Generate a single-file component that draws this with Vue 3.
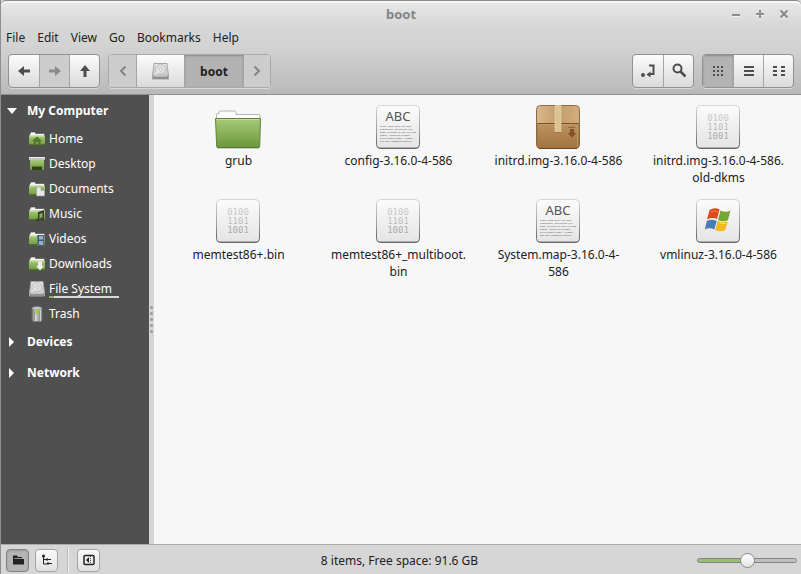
<script setup>
import { ref } from 'vue';

const menus = ['File', 'Edit', 'View', 'Go', 'Bookmarks', 'Help'];

const places = [
  { name: 'Home', icon: 'home' },
  { name: 'Desktop', icon: 'desktop' },
  { name: 'Documents', icon: 'documents' },
  { name: 'Music', icon: 'music' },
  { name: 'Videos', icon: 'videos' },
  { name: 'Downloads', icon: 'downloads' },
  { name: 'File System', icon: 'disk', used: 7 },
  { name: 'Trash', icon: 'trash' },
];

// long names are kept as the lines they break into
const files = [
  { lines: ['grub'], type: 'folder' },
  { lines: ['config-3.16.0-4-586'], type: 'text' },
  { lines: ['initrd.img-3.16.0-4-586'], type: 'package' },
  { lines: ['initrd.img-3.16.0-4-586.', 'old-dkms'], type: 'binary' },
  { lines: ['memtest86+.bin'], type: 'binary' },
  { lines: ['memtest86+_multiboot.', 'bin'], type: 'binary' },
  { lines: ['System.map-3.16.0-4-', '586'], type: 'text' },
  { lines: ['vmlinuz-3.16.0-4-586'], type: 'windows' },
];

const view = ref('icons');
const sidePane = ref('places');
const zoom = ref(50);
</script>

<template>
  <div class="window">
    <svg class="defs" aria-hidden="true">
      <defs>
        <linearGradient id="green" x1="0" y1="0" x2="0" y2="1">
          <stop offset="0" stop-color="#a7ca79" />
          <stop offset="1" stop-color="#6c973b" />
        </linearGradient>
        <linearGradient id="tile" x1="0" y1="0" x2="0" y2="1">
          <stop offset="0" stop-color="#fbfbfb" />
          <stop offset="1" stop-color="#e4e4e4" />
        </linearGradient>
        <linearGradient id="edge" x1="0" y1="0" x2="0" y2="1">
          <stop offset="0" stop-color="#d5d5d5" />
          <stop offset="0.6" stop-color="#9a9a9a" />
          <stop offset="1" stop-color="#5a5a5a" />
        </linearGradient>
        <linearGradient id="box" x1="0" y1="0" x2="0" y2="1">
          <stop offset="0" stop-color="#d5b083" />
          <stop offset="0.45" stop-color="#bb925f" />
          <stop offset="1" stop-color="#a0723e" />
        </linearGradient>
        <linearGradient id="flap" x1="0" y1="0" x2="1" y2="0">
          <stop offset="0" stop-color="#d9b78c" />
          <stop offset="0.5" stop-color="#c39d6b" />
          <stop offset="1" stop-color="#d2ad7d" />
        </linearGradient>
        <linearGradient id="metal" x1="0" y1="0" x2="0" y2="1">
          <stop offset="0" stop-color="#e6e6e6" />
          <stop offset="1" stop-color="#c4c4c4" />
        </linearGradient>
        <linearGradient id="can" x1="0" y1="0" x2="1" y2="0">
          <stop offset="0" stop-color="#6f6f6f" />
          <stop offset="0.35" stop-color="#dedede" />
          <stop offset="0.6" stop-color="#a5a5a5" />
          <stop offset="0.85" stop-color="#d2d2d2" />
          <stop offset="1" stop-color="#707070" />
        </linearGradient>
        <symbol id="drive" viewBox="0 0 16 16">
          <path d="M2 .5h12l1.500 11v3.500h-15v-3.500z" fill="url(#metal)" stroke="#a8a8a8" />
          <ellipse cx="8" cy="6" rx="5" ry="4.500" fill="#dedede" stroke="#b4b4b4" stroke-width=".7" />
          <circle cx="8" cy="6" r="1.500" fill="#eee" stroke="#aaa" stroke-width=".5" />
          <path d="M3.500 10.500l3-3" stroke="#f8f8f8" />
          <path d="M1 12h14v3H1z" fill="#909090" />
          <path d="M2 12.500h12" stroke="#c6c6c6" />
        </symbol>
      </defs>
    </svg>

    <header class="header">
      <div class="titlebar">
        <h1>boot</h1>
        <div class="controls">
          <button aria-label="Minimize">
            <svg width="8" height="8"><path d="M0 5h8" stroke="#8c8c8c" stroke-width="2" /></svg>
          </button>
          <button aria-label="Maximize">
            <svg width="8" height="8"><path d="M0 4h8M4 0v8" stroke="#8c8c8c" stroke-width="2" /></svg>
          </button>
          <button aria-label="Close">
            <svg width="8" height="8"><path d="M.5.5l7 7M7.500.5l-7 7" stroke="#8c8c8c" stroke-width="2.200" /></svg>
          </button>
        </div>
      </div>

      <nav class="menubar">
        <button v-for="menu in menus" :key="menu">{{ menu }}</button>
      </nav>

      <div class="toolbar">
        <div class="group">
          <button aria-label="Back">
            <svg width="14" height="14"><path d="M1 7l6-5v3.500h6v3H7V12z" fill="#4d4d4d" /></svg>
          </button>
          <button class="off" aria-label="Forward" disabled>
            <svg width="14" height="14"><path d="M13 7L7 2v3.500H1v3h6V12z" fill="#8a8a8a" /></svg>
          </button>
          <button aria-label="Up">
            <svg width="14" height="14"><path d="M7 1l5 6H8.500v6h-3V7H2z" fill="#4d4d4d" /></svg>
          </button>
        </div>

        <div class="group path">
          <button class="off narrow" aria-label="Previous path">
            <svg width="8" height="12"><path d="M6.500 1.500L2 6l4.500 4.500" fill="none" stroke="#858585" stroke-width="2" /></svg>
          </button>
          <button class="wide" aria-label="File System">
            <svg width="17" height="17"><use href="#drive" /></svg>
          </button>
          <button class="pressed current">boot</button>
          <button class="off narrow" aria-label="Next path">
            <svg width="8" height="12"><path d="M1.500 1.500L6 6l-4.500 4.500" fill="none" stroke="#858585" stroke-width="2" /></svg>
          </button>
        </div>

        <div class="group push">
          <button aria-label="Toggle location entry">
            <svg width="16" height="16">
              <circle cx="3" cy="12" r="2" fill="#4d4d4d" />
              <path d="M9 2.500h4.500v8.500H10" fill="none" stroke="#4d4d4d" stroke-width="2" />
              <path d="M6.500 11.500l4-3v6z" fill="#4d4d4d" />
            </svg>
          </button>
          <button aria-label="Search">
            <svg width="16" height="16">
              <circle cx="6.500" cy="5.500" r="4" fill="none" stroke="#4d4d4d" stroke-width="2" />
              <path d="M9.500 8.500l5 5" stroke="#4d4d4d" stroke-width="2.500" />
            </svg>
          </button>
        </div>

        <div class="group">
          <button :class="{ pressed: view === 'icons' }" aria-label="Icon view" @click="view = 'icons'">
            <svg width="12" height="12">
              <path d="M1 2h10M1 6h10M1 10h10" stroke="#4d4d4d" stroke-width="2" stroke-dasharray="2 2" />
            </svg>
          </button>
          <button :class="{ pressed: view === 'list' }" aria-label="List view" @click="view = 'list'">
            <svg width="12" height="12"><path d="M1 2h10M1 6h10M1 10h10" stroke="#4d4d4d" stroke-width="2" /></svg>
          </button>
          <button :class="{ pressed: view === 'compact' }" aria-label="Compact view" @click="view = 'compact'">
            <svg width="12" height="12">
              <path d="M0 2h4M8 2h4M0 6h4M8 6h4M0 10h4M8 10h4" stroke="#4d4d4d" stroke-width="2" />
            </svg>
          </button>
        </div>
      </div>
    </header>

    <main class="body">
      <aside class="sidebar">
        <button class="heading">
          <svg width="10" height="10"><path d="M0 2h10L5 8z" fill="#fff" /></svg>My Computer
        </button>
        <ul>
          <li v-for="place in places" :key="place.name">
            <a href="#">
              <svg width="16" height="16" viewBox="0 0 16 16">
                <use v-if="place.icon === 'disk'" href="#drive" />
                <g v-else-if="place.icon === 'trash'">
                  <path d="M3 2.500h10v11q0 2-2 2H5q-2 0-2-2z" fill="url(#can)" stroke="#777" stroke-width=".6" />
                  <ellipse cx="8" cy="2.300" rx="4.800" ry="1.700" fill="#c9c9c9" stroke="#858585" stroke-width=".7" />
                  <path d="M5.500 5v10M10.500 5v10" stroke="#777" stroke-width=".6" />
                  <path d="M6.500 5l2-1.500L10.500 6 9.500 8.500 8 7 6.500 8.500z" fill="#8dd22d" />
                </g>
                <g v-else-if="place.icon === 'desktop'">
                  <path d="M0 1h16v3H0z" fill="#c3c3c3" />
                  <path d="M0 1.500h16" stroke="#eee" />
                  <path d="M1 4h14v10H1z" fill="url(#green)" />
                  <path d="M3 10h10v4H3z" fill="#2e4511" />
                  <path d="M3 10.500h10" stroke="#5c7c34" />
                </g>
                <g v-else>
                  <path d="M.5 14V2.500h1V1h5v1.500h9V14z" fill="#f6f6f6" stroke="#444" stroke-width=".6" />
                  <path d="M0 4.500h16v10H0z" fill="url(#green)" />
                  <path d="M1 5.500h14" stroke="#bcd996" />
                  <path d="M0 14h16" stroke="#38451f" />
                  <path v-if="place.icon === 'home'" d="M8 5.500L3 10h1.500v3.500H7V11h2v2.500h2.500V10H13z" fill="#557b30" />
                  <path
                    v-if="place.icon === 'documents'"
                    d="M7.500 6h4.500l3.500 3.500V15h-8z M12 6v3.500h3.500"
                    fill="#e8e8e8"
                    stroke="#999"
                    stroke-width=".6"
                  />
                  <g v-if="place.icon === 'music'" fill="#3a3f33">
                    <path d="M9 6l6-2v9h-1.500V7l-3 1v6H9z" />
                    <ellipse cx="8.700" cy="14" rx="2" ry="1.500" />
                    <ellipse cx="13" cy="13" rx="2" ry="1.500" />
                  </g>
                  <g v-if="place.icon === 'videos'">
                    <path d="M8 4h7.500v11H8z" fill="#505960" />
                    <path d="M10 5h4v3.500h-4zM10 10h4v4h-4z" fill="#83b4d9" />
                    <path d="M8.500 4v11M15 4v11" stroke="#9aa3a8" stroke-width=".8" stroke-dasharray="1 1" />
                  </g>
                  <path v-if="place.icon === 'downloads'" d="M9 5.500h4V10h2L11 14.500 7 10h2z" fill="#eee" />
                </g>
              </svg>
              <span class="place" :class="{ metered: place.used }">
                {{ place.name }}
                <span v-if="place.used" class="meter"><i :style="{ width: place.used + '%' }"></i></span>
              </span>
            </a>
          </li>
        </ul>
        <button class="heading">
          <svg width="10" height="10"><path d="M2 0l5 5-5 5z" fill="#fff" /></svg>Devices
        </button>
        <button class="heading">
          <svg width="10" height="10"><path d="M2 0l5 5-5 5z" fill="#fff" /></svg>Network
        </button>
      </aside>

      <div class="handle"><i v-for="n in 5" :key="n"></i></div>

      <section class="files">
        <a v-for="file in files" :key="file.lines.join('')" class="file" href="#">
          <svg width="48" height="48" viewBox="0 0 48 48">
            <g v-if="file.type === 'folder'">
              <path d="M2.500 18v-6.500q0-.8 1-.8h1.500V9q0-1 1-1h15q1 0 1 1v2.500h23q1 0 1 1V18z" fill="#fdfdfd" stroke="#b5b5b5" />
              <path d="M1.500 15.500h45l-.8 28q0 1-1 1h-41q-1 0-1-1z" fill="url(#green)" stroke="#648339" />
              <path d="M2.500 16.500h43" stroke="#c1dc9e" />
              <path d="M3 45h42" stroke="#3b5a22" stroke-opacity=".5" />
            </g>
            <g v-else-if="file.type === 'package'">
              <rect x="2.500" y="2.500" width="43" height="43" rx="4" fill="url(#box)" stroke="#896c49" />
              <path d="M3.500 6q0-3 3-3h35q3 0 3 3l.5 14H3z" fill="url(#flap)" />
              <path d="M4 20.500h40" stroke="#78512b" />
              <path d="M4.500 23q0-1.500 1.500-1.500h36q1.500 0 1.500 1.500v21" fill="none" stroke="#c59d68" stroke-width=".7" />
              <path d="M3 20v23M45 20v23" stroke="#916538" stroke-width=".8" />
              <path d="M21 2h6v27h-6z" fill="#dbc393" />
              <path d="M21 3v26M27 3v26" stroke="#edd8ad" stroke-width=".6" />
              <path d="M21 29.500h6" stroke="#9b7646" />
              <path d="M34 24.500h7" stroke="#986334" />
              <path d="M36 26h4v4h2.500L38 34.500 33.500 30H36z" fill="#865024" />
              <path d="M5 45.500h38" stroke="#65482b" />
            </g>
            <g v-else>
              <rect x="2.500" y="2.500" width="43" height="43" rx="4" fill="url(#tile)" stroke="url(#edge)" />
              <path d="M5 45h38" stroke="#777" />
              <g v-if="file.type === 'text'">
                <text class="abc" x="24" y="18" text-anchor="middle">ABC</text>
                <g class="lorem">
                  <text x="6" y="24">Lorem ipsum dolor sit amet,</text>
                  <text x="6" y="27">consectetur adipiscing elit.</text>
                  <text x="6" y="30">Donec at metus at est eleifend</text>
                  <text x="6" y="33">tempor. Phasellus blandit</text>
                  <text x="6" y="36">sollicitudin justo. Vivamus,</text>
                  <text x="6" y="39">non eget consequat sodales.</text>
                </g>
              </g>
              <g v-else-if="file.type === 'binary'" class="bits">
                <text x="24" y="18" fill="#c9c9c9" text-anchor="middle">0100</text>
                <text x="24" y="27" fill="#bdbdbd" text-anchor="middle">1101</text>
                <text x="24" y="36" fill="#acacac" text-anchor="middle">1001</text>
              </g>
              <g v-else>
                <path d="M15.500 13q5-3 10-.5L23 22q-5-2-10 .5z" fill="#dc4b1c" />
                <path d="M26.500 13.500q5 2.500 10 0L34 23q-5 2.500-10 0z" fill="#74a733" />
                <path d="M12.800 24q5-2.500 10 0l-2.500 8.500q-5-2.500-9.500 0z" fill="#477eb7" />
                <path d="M23.800 24q5 2.500 10 .3L31.300 33q-5 2.500-10 0z" fill="#f0b91f" />
                <path d="M16.500 15q4-2 7-.5" fill="none" stroke="#f1865c" />
                <path d="M25.500 25.500q3 1.500 6 1" fill="none" stroke="#ffe277" />
              </g>
            </g>
          </svg>
          <span v-for="line in file.lines" :key="line">{{ line }}</span>
        </a>
      </section>
    </main>

    <footer class="statusbar">
      <div class="left">
        <button :class="{ pressed: sidePane === 'places' }" aria-label="Show places" @click="sidePane = 'places'">
          <svg width="12" height="12">
            <path d="M1 1.500h4l1 1.500h4v1.500H3L1 9z" fill="#222" />
            <path d="M1 10.500V5h11v5.500z" fill="#222" />
            <path d="M2 4.500h9" stroke="#aaa" stroke-width=".7" />
          </svg>
        </button>
        <button :class="{ pressed: sidePane === 'tree' }" aria-label="Show tree" @click="sidePane = 'tree'">
          <svg width="12" height="12">
            <path d="M2.500 2v8H6M2.500 5.500H6M7 5.500h3M7 9.500h4" fill="none" stroke="#222" />
            <circle cx="2.500" cy="2" r="1.500" fill="#222" />
            <path d="M5 4.500h2v2H5zM6 8.500h2v2H6z" fill="#222" />
          </svg>
        </button>
        <span class="separator"></span>
        <button aria-label="Hide sidebar">
          <svg width="12" height="12">
            <rect x="1" y="1.500" width="10" height="9" rx="1" fill="none" stroke="#222" stroke-width="1.500" />
            <path d="M3 6l3-3v6z" fill="#222" />
            <path d="M7.500 2v8" stroke="#222" stroke-width=".8" stroke-dasharray="1 1" />
          </svg>
        </button>
      </div>
      <p>8 items, Free space: 91.6 GB</p>
      <div class="right">
        <input v-model="zoom" type="range" min="0" max="100" aria-label="Zoom" />
      </div>
    </footer>
  </div>
</template>

<style>
body {
  margin: 0;
  background: #d6d6d6;
}
</style>

<style scoped>
.window {
  display: flex;
  flex-direction: column;
  box-sizing: border-box;
  min-height: 100vh;
  border-left: 1px solid #8f8f8f;
  background: #d6d6d6;
  color: #212121;
  font: 12px/17px 'Noto Sans', sans-serif;
}

.defs {
  position: absolute;
  width: 0;
  height: 0;
}

button {
  margin: 0;
  padding: 0;
  border: 0;
  background: none;
  color: inherit;
  font: inherit;
}

a {
  color: inherit;
  text-decoration: none;
}

svg {
  display: block;
  flex: none;
}

.header {
  border-top: 1px solid #8a8a8a;
  border-bottom: 1px solid #8f8f8f;
  border-radius: 5px 5px 0 0;
  background: linear-gradient(#e9e9e9, #d6d6d6 26px, #d3d3d3 45px, #b9b9b9);
  box-shadow: inset 0 2px #f8f8f8;
}

.titlebar {
  display: grid;
  grid-template-columns: 1fr auto 1fr;
  align-items: center;
  height: 26px;
  padding: 0 13px;
}

h1 {
  grid-column: 2;
  margin: 0;
  color: #858585;
  font-size: 13px;
  line-height: 18px;
}

.controls {
  display: flex;
  justify-content: flex-end;
  gap: 16px;
}

.controls svg {
  filter: drop-shadow(0 1px #f4f4f4);
}

.menubar {
  display: flex;
  gap: 12px;
  padding: 2px 5px 8px;
}

.toolbar {
  display: flex;
  gap: 8px;
  padding: 0 7px 6px;
}

.group {
  display: flex;
  box-sizing: border-box;
  height: 34px;
  border: 1px solid #919191;
  border-radius: 4px;
  background: linear-gradient(#fcfcfc, #dadada);
  box-shadow: 0 1px #d8d8d8;
  overflow: hidden;
}

.group button {
  display: flex;
  align-items: center;
  justify-content: center;
  width: 30px;
}

.group button + button {
  border-left: 1px solid #a5a5a5;
}

.group .off {
  background: #cdcdcd;
}

.group .pressed {
  background: #b3b3b3;
  box-shadow: inset 0 1px 2px #888;
}

.group .narrow {
  width: 27px;
}

.group .wide {
  width: 48px;
}

.group .current {
  width: 59px;
  font-weight: 700;
}

.path {
  border-color: #a9a9a9;
}

.push {
  margin-left: auto;
}

.body {
  display: flex;
  flex: 1;
}

.sidebar {
  width: 148px;
  background: #505050;
  color: #fff;
}

.heading {
  display: flex;
  align-items: center;
  gap: 10px;
  width: 100%;
  height: 31px;
  padding-left: 6px;
  font-weight: 700;
}

ul {
  margin: 0;
  padding: 0;
  list-style: none;
}

li a {
  display: flex;
  align-items: center;
  gap: 4px;
  height: 25px;
  padding-left: 28px;
}

.metered {
  position: relative;
  width: 70px;
}

.meter {
  position: absolute;
  bottom: -1px;
  left: 0;
  width: 100%;
  height: 2px;
  background: #d8d8d8;
}

.meter i {
  display: block;
  height: 2px;
  background: #8fb26b;
}

.handle {
  display: flex;
  flex-direction: column;
  align-items: center;
  justify-content: center;
  gap: 3px;
  width: 5px;
  background: #d6d6d6;
}

.handle i {
  width: 3px;
  height: 3px;
  border-radius: 2px;
  background: #999;
}

.files {
  display: grid;
  flex: 1;
  grid-template-columns: repeat(4, 1fr);
  grid-auto-rows: 84px;
  align-content: start;
  row-gap: 10px;
  padding: 8px 3px 8px 4px;
  background: #f7f7f7;
}

.file {
  display: flex;
  flex-direction: column;
  align-items: center;
}

.file svg {
  margin-bottom: 1px;
}

.file span {
  padding-left: 1px;
}

.abc {
  fill: #555;
  font: 13px 'Noto Sans', sans-serif;
}

.lorem {
  fill: #444;
  font: 2px 'Liberation Mono', monospace;
}

.bits {
  font: 9px 'DejaVu Sans Mono', monospace;
}

.statusbar {
  display: grid;
  grid-template-columns: 1fr auto 1fr;
  align-items: center;
  height: 28px;
  border-top: 1px solid #aaa;
  padding: 1px 4px 0 5px;
}

.statusbar p {
  margin: 0;
  padding-right: 4px;
}

.left,
.right {
  display: flex;
  align-items: center;
}

.left {
  gap: 6px;
}

.right {
  justify-content: flex-end;
}

.left button {
  display: flex;
  align-items: center;
  justify-content: center;
  box-sizing: border-box;
  width: 23px;
  height: 23px;
  border: 1px solid #a3a3a3;
  border-radius: 4px;
  background: linear-gradient(#fafafa, #e0e0e0);
}

.left .pressed {
  border-color: #828282;
  background: #b5b5b5;
  box-shadow: inset 0 1px 2px #999;
}

.separator {
  width: 1px;
  height: 24px;
  margin: 0 3px;
  background: #bbb;
  box-shadow: 1px 0 #eee;
}

input {
  width: 100px;
  height: 16px;
  margin: 0;
  appearance: none;
  background: none;
}

input::-webkit-slider-runnable-track {
  box-sizing: border-box;
  height: 5px;
  border: 1px solid #848484;
  border-radius: 3px;
  background: linear-gradient(90deg, #98bd78 50%, #c0c0c0 50%);
}

input::-webkit-slider-thumb {
  box-sizing: border-box;
  width: 15px;
  height: 15px;
  margin-top: -6px;
  border: 1px solid #888;
  border-radius: 50%;
  appearance: none;
  background: linear-gradient(#fff, #e5e5e5);
}
</style>
